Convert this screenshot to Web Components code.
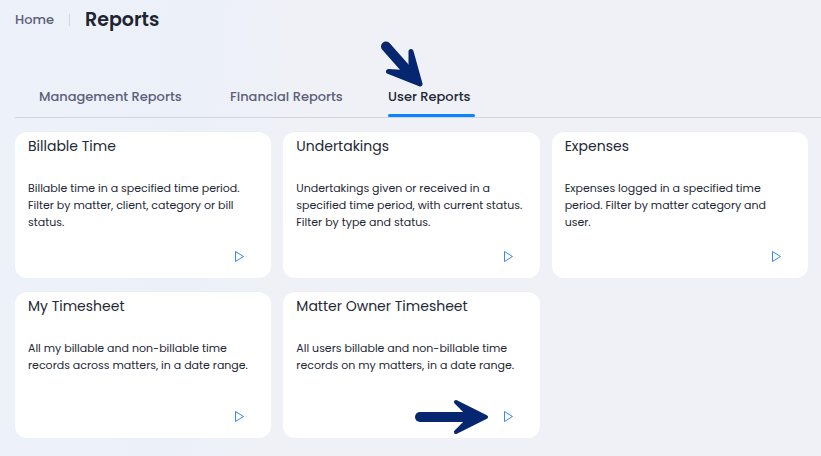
<!DOCTYPE html>
<html lang="en">
<head>
<meta charset="utf-8">
<meta name="viewport" content="width=device-width, initial-scale=1">
<title>Reports</title>
<style>
  html { min-height: 100%; background: linear-gradient(95deg, #ecf1fa 0, #ecf0f9 24%, #f0f1f6 38%); }
  body { margin: 0; font-family: Poppins, Inter, "Open Sans", sans-serif; color: #232836; }
</style>
</head>
<body>
<reports-page></reports-page>

<template id="t-page">
  <style>
    :host { display: block; padding: 0 0 18px 15px; }
    main { display: grid; grid-template-columns: repeat(3, 1fr); gap: 13px 12px; padding: 13px 13px 0 0; }
  </style>
  <page-header></page-header>
  <report-tabs></report-tabs>
  <main>
    <report-card name="Billable Time">Billable time in a specified time period. Filter by matter, client, category or bill status.</report-card>
    <report-card name="Undertakings">Undertakings given or received in a specified time period, with current status. Filter by type and status.</report-card>
    <report-card name="Expenses">Expenses logged in a specified time period. Filter by matter category and user.</report-card>
    <report-card name="My Timesheet">All my billable and non-billable time records across matters, in a date range.</report-card>
    <report-card name="Matter Owner Timesheet">All users billable and non-billable time records on my matters, in a date range.<pointer-arrow slot="pointer" direction="right"></pointer-arrow></report-card>
  </main>
</template>

<template id="t-header">
  <style>
    :host { display: flex; align-items: center; height: 40px; }
    a { color: #5c6079; font-size: 13px; font-weight: 500; text-decoration: none; }
    i { width: 1px; height: 12px; margin: 0 15px; background: #d3d7e3; }
    h1 { margin: 0; font-size: 19px; line-height: 28px; font-weight: 600; color: #20242e; }
  </style>
  <a href="#home">Home</a><i></i><h1>Reports</h1>
</template>

<template id="t-tabs">
  <style>
    :host { display: block; padding: 40px 0 0 24px; border-bottom: 1px solid #d3d6e2; }
    nav { display: grid; grid-template-columns: 191px 158px 87px; }
    a { position: relative; display: block; height: 37px; padding-top: 5px; box-sizing: border-box; font-size: 13px; line-height: 24px; font-weight: 500; color: #5c6079; text-decoration: none; white-space: nowrap; }
    a[aria-current] { color: #232836; }
    a[aria-current]::after { content: ""; position: absolute; left: 0; right: 0; bottom: 0; height: 3px; border-radius: 2px; background: #0a84ff; }
    pointer-arrow { position: absolute; left: -10px; bottom: 30px; }
  </style>
  <nav aria-label="Report groups">
    <a href="#management">Management Reports</a>
    <a href="#financial">Financial Reports</a>
    <a href="#user" aria-current="page">User Reports<pointer-arrow direction="down"></pointer-arrow></a>
  </nav>
</template>

<template id="t-card">
  <style>
    :host { position: relative; display: flex; flex-direction: column; box-sizing: border-box; min-height: 147px; padding: 4px 14px 10px 13px; background: #fff; border-radius: 12px; box-shadow: inset 0 1px #ebecef; }
    h2 { margin: 0; font-size: 14px; line-height: 22px; font-weight: 400; }
    p { margin: 23px 0 0; font-size: 11px; line-height: 17px; }
    button { display: flex; margin: auto 7px 0 auto; padding: 5px; border: 0; background: none; cursor: pointer; }
    svg { display: block; }
    ::slotted([slot="pointer"]) { position: absolute; right: 51px; bottom: 2px; }
  </style>
  <h2></h2>
  <p><slot></slot></p>
  <button type="button"><svg width="11" height="12" viewBox="0 0 11 12" fill="none" stroke="#3489f5"><path d="M1.500 .5 9.500 5.500l-8 5z"/></svg></button>
  <slot name="pointer"></slot>
</template>

<template id="t-arrow">
  <style>
    :host { display: block; pointer-events: none; }
    svg { display: block; fill: #06276f; stroke: #06276f; stroke-linecap: round; stroke-linejoin: round; }
  </style>
</template>

<script>
  class Base extends HTMLElement {
    constructor() {
      super();
      this.attachShadow({ mode: 'open' }).append(document.getElementById(this.constructor.template).content.cloneNode(true));
    }
  }
  class PointerArrow extends Base {
    static template = 't-arrow';
    connectedCallback() {
      if (this.shadowRoot.querySelector('svg')) return;
      const down = this.getAttribute('direction') === 'down';
      const art = down
        ? '<svg width="46" height="46" viewBox="378 41 46 46" aria-hidden="true"><path d="M386 46.500 413 77" stroke-width="10"/><path d="M411 51.500 420 84 388.500 71.500 405 72.500 411 67z" stroke-width="5"/></svg>'
        : '<svg width="75" height="38" viewBox="414 398 75 38" aria-hidden="true"><path d="M420 417H474" stroke-width="10"/><path d="M456 402 486 417 456 432 467 421V413z" stroke-width="4"/></svg>';
      this.shadowRoot.append(document.createRange().createContextualFragment(art));
    }
  }
  class PageHeader extends Base { static template = 't-header'; }
  class ReportTabs extends Base { static template = 't-tabs'; }
  class ReportCard extends Base {
    static template = 't-card';
    connectedCallback() {
      const name = this.getAttribute('name');
      this.shadowRoot.querySelector('h2').textContent = name;
      this.shadowRoot.querySelector('button').setAttribute('aria-label', 'Run ' + name);
    }
  }
  class ReportsPage extends Base { static template = 't-page'; }
  customElements.define('pointer-arrow', PointerArrow);
  customElements.define('page-header', PageHeader);
  customElements.define('report-tabs', ReportTabs);
  customElements.define('report-card', ReportCard);
  customElements.define('reports-page', ReportsPage);
</script>
</body>
</html>
